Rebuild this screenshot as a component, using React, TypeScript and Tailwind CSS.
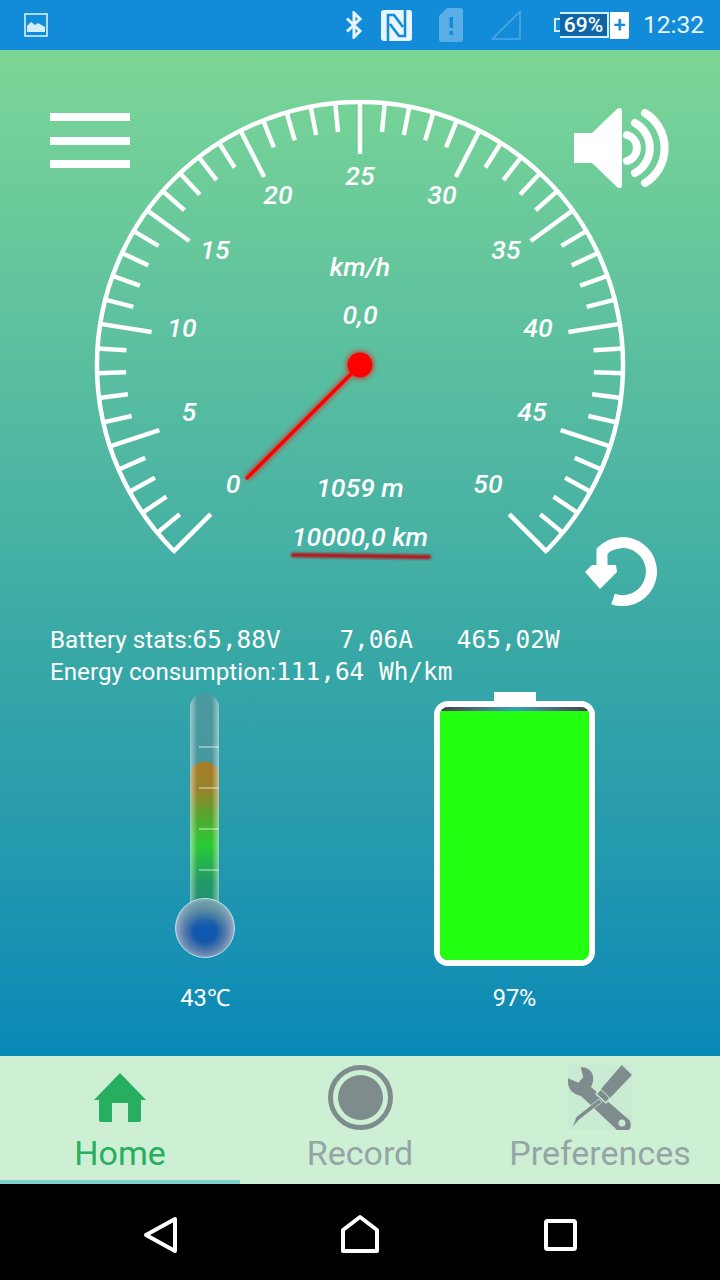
import { useMemo } from "react";

const scale = [
  { v: "0", x: 233, y: 484 },
  { v: "5", x: 189, y: 412 },
  { v: "10", x: 182, y: 328 },
  { v: "15", x: 215, y: 250 },
  { v: "20", x: 278, y: 195 },
  { v: "25", x: 360, y: 176 },
  { v: "30", x: 442, y: 195 },
  { v: "35", x: 506, y: 250 },
  { v: "40", x: 538, y: 328 },
  { v: "45", x: 532, y: 412 },
  { v: "50", x: 488, y: 484 },
];

const readouts = [
  { v: "km/h", y: 267 },
  { v: "0,0", y: 315 },
  { v: "1059 m", y: 488 },
  { v: "10000,0 km", y: 537 },
];

function Dial() {
  const ticks = useMemo(() => {
    const cx = 360;
    const cy = 365;
    const r = 263;
    const out = [];
    for (let i = 0; i <= 50; i++) {
      const a = ((225 - i * 5.4) * Math.PI) / 180;
      const major = i % 5 === 0;
      const end = i === 0 || i === 50;
      const start = end ? r + 2 : r;
      const len = major ? 52 : 29;
      out.push({
        x1: cx + start * Math.cos(a),
        y1: cy - start * Math.sin(a),
        x2: cx + (r - len) * Math.cos(a),
        y2: cy - (r - len) * Math.sin(a),
      });
    }
    return out;
  }, []);

  return (
    <svg viewBox="0 50 720 574" className="block w-[720px] h-[574px]">
      <defs>
        <filter id="glow" x="-30%" y="-30%" width="160%" height="160%">
          <feGaussianBlur stdDeviation="2.5" />
        </filter>
        <filter id="soft" x="-5%" y="-200%" width="110%" height="500%">
          <feGaussianBlur stdDeviation="0.8" />
        </filter>
      </defs>
      <path
        d="M174 551 A263 263 0 1 1 546 551"
        fill="none"
        stroke="white"
        strokeWidth="4.5"
      />
      {ticks.map((t, i) => (
        <line
          key={i}
          x1={t.x1}
          y1={t.y1}
          x2={t.x2}
          y2={t.y2}
          stroke="white"
          strokeWidth="4.5"
        />
      ))}
      {scale.map((s) => (
        <text
          key={s.v}
          x={s.x}
          y={s.y + 8.5}
          textAnchor="middle"
          className="fill-white italic font-medium text-[26.6px] font-['Roboto',sans-serif]"
        >
          {s.v}
        </text>
      ))}
      {readouts.map((s) => (
        <text
          key={s.v}
          x={360}
          y={s.y + 8.5}
          textAnchor="middle"
          className="fill-white italic font-medium text-[26.6px] font-['Roboto',sans-serif]"
        >
          {s.v}
        </text>
      ))}
      <g filter="url(#glow)" opacity="0.6">
        <line x1="360" y1="365" x2="247" y2="478" stroke="#ff0000" strokeWidth="6" />
        <circle cx="360" cy="365" r="14" fill="#ff0000" />
      </g>
      <line x1="360" y1="365" x2="247" y2="478" stroke="#ff0000" strokeWidth="3.5" strokeLinecap="round" />
      <circle cx="360" cy="365" r="12.5" fill="#ff0000" />
      <line x1="293" y1="555" x2="429" y2="557" stroke="#b3161c" strokeWidth="4.5" strokeLinecap="round" filter="url(#soft)" />
    </svg>
  );
}

function SpeakerIcon() {
  return (
    <svg viewBox="574 106 98 84" className="w-[98px] h-[84px]">
      <path d="M574 133H592L617 109Q622 106 622 112V184Q622 190 617 187L592 163H574Z" fill="white" />
      <g fill="none" stroke="white" strokeWidth="8" strokeLinecap="round">
        <path d="M627 135A13.5 13.5 0 0 1 627 161" />
        <path d="M635 123A28.5 28.5 0 0 1 635 173" />
        <path d="M645 113A41 41 0 0 1 645 183" />
      </g>
    </svg>
  );
}

function ResetIcon() {
  return (
    <svg viewBox="584 536 74 70" className="w-[74px] h-[70px]">
      <path
        d="M602 570V551A29 29 0 1 1 613 599"
        fill="none"
        stroke="white"
        strokeWidth="11"
      />
      <path d="M585 572L592 565H616L617 572L600 589Z" fill="white" />
    </svg>
  );
}

function Thermometer() {
  return (
    <svg viewBox="170 688 70 278" className="block w-[70px] h-[278px]">
      <defs>
        <linearGradient id="liquid" x1="0" y1="0" x2="0" y2="1">
          <stop offset="0" stopColor="#a5741c" />
          <stop offset="0.2" stopColor="#8f7f1f" />
          <stop offset="0.36" stopColor="#4fa024" />
          <stop offset="0.56" stopColor="#1fc82c" />
          <stop offset="0.8" stopColor="#17965c" />
          <stop offset="1" stopColor="#158676" />
        </linearGradient>
        <linearGradient id="tubeEdge" x1="0" y1="0" x2="1" y2="0">
          <stop offset="0" stopColor="white" stopOpacity="0.5" />
          <stop offset="0.25" stopColor="white" stopOpacity="0.05" />
          <stop offset="0.75" stopColor="white" stopOpacity="0.05" />
          <stop offset="1" stopColor="white" stopOpacity="0.5" />
        </linearGradient>
        <radialGradient id="bulb" cx="0.5" cy="0.55" r="0.55">
          <stop offset="0" stopColor="#0c56b8" />
          <stop offset="0.35" stopColor="#1558aa" />
          <stop offset="0.68" stopColor="#5f82ac" />
          <stop offset="0.88" stopColor="#95a6c8" />
          <stop offset="1" stopColor="#d8e8f2" />
        </radialGradient>
        <linearGradient id="bulbTop" x1="0" y1="0" x2="0" y2="1">
          <stop offset="0" stopColor="#5a9a98" stopOpacity="0.75" />
          <stop offset="0.5" stopColor="#5a9a98" stopOpacity="0" />
        </linearGradient>
      </defs>
      <rect x="190" y="693" width="29" height="230" rx="14.5" fill="#4a8a90" fillOpacity="0.6" />
      <path d="M190 776A14.5 14.5 0 0 1 219 776V910H190Z" fill="url(#liquid)" />
      <rect x="190" y="693" width="29" height="230" rx="14.5" fill="url(#tubeEdge)" />
      {[747, 788, 829, 870].map((y) => (
        <line key={y} x1="199" y1={y} x2="219" y2={y} stroke="white" strokeOpacity="0.75" />
      ))}
      <circle cx="205" cy="928" r="29.5" fill="url(#bulb)" />
      <circle cx="205" cy="928" r="29.5" fill="url(#bulbTop)" stroke="#d7eef2" strokeOpacity="0.8" strokeWidth="1" />
    </svg>
  );
}

function ToolsIcon() {
  return (
    <svg viewBox="0 0 64 65" className="w-[64px] h-[65px] bg-[#c9ebd3]">
      <path
        d="M0.3 13.3L10.3 17.7L15.3 12.3L12.7 2.3Q20 2 24 8Q27 15 23 22L59 53A8 8 0 1 1 48 64L13 31Q-2 27 0.3 13.3Z"
        fill="#7f8c8d"
      />
      <circle cx="54" cy="58" r="3.5" fill="#c9ebd3" />
      <path
        d="M31 34L34 37L11 55L4 63L8 52Z"
        fill="#7f8c8d"
        stroke="#c9ebd3"
        strokeWidth="0.8"
      />
      <path
        d="M33 24L42 33L38 38L28 29Z"
        fill="#7f8c8d"
        stroke="#c9ebd3"
        strokeWidth="1.5"
        strokeLinejoin="round"
      />
      <path d="M53.7 0L64 10L42 33L33 24Z" fill="#7f8c8d" />
    </svg>
  );
}

export default function App() {
  return (
    <div className="w-[720px] h-[1280px] flex flex-col overflow-hidden font-['Roboto',sans-serif]">
      <div className="h-[50px] shrink-0 bg-[#128cd8] text-white">
        <div className="h-full flex items-center pl-[24px] pr-[16px]">
          <svg viewBox="0 0 24 24" className="w-[24px] h-[24px]">
            <rect x="1" y="1" width="22" height="22" fill="none" stroke="#d5eefc" strokeWidth="1.6" />
            <path d="M3 19V13L7 9L11 12L14 10L21 14V19Z" fill="#d5eefc" />
          </svg>
          <svg viewBox="0 0 18 28" className="ml-[297px] w-[18px] h-[28px]">
            <path d="M2 7.5L15 20L9 26V2L15 8L2 20.5" fill="none" stroke="#e6f4fd" strokeWidth="3" />
          </svg>
          <svg viewBox="0 0 31 31" className="ml-[18px] w-[31px] h-[31px]">
            <rect width="31" height="31" rx="3" fill="#e9f6fe" />
            <path d="M7 31V5H13L22 17" fill="none" stroke="#128cd8" strokeWidth="2.6" />
            <path d="M24 0V26H18L9 14" fill="none" stroke="#128cd8" strokeWidth="2.6" />
          </svg>
          <svg viewBox="0 0 24 34" className="ml-[27px] w-[24px] h-[34px]">
            <path d="M8 0H21Q24 0 24 3V31Q24 34 21 34H3Q0 34 0 31V8Z" fill="#5aaee6" />
            <rect x="10.5" y="9" width="3.5" height="11" fill="#128cd8" />
            <rect x="10.5" y="23" width="3.5" height="4" fill="#128cd8" />
          </svg>
          <svg viewBox="0 0 30 30" className="ml-[28px] w-[30px] h-[30px]">
            <path d="M29 1.5V29H1.5Z" fill="none" stroke="#4ea6e2" strokeWidth="1.6" />
          </svg>
          <div className="ml-[33px] flex items-center">
            <div className="w-[6px] h-[14px] border-l-2 border-y-2 border-[#d5eefc]" />
            <div className="w-[49px] h-[26px] flex items-center justify-center border-2 border-l-0 border-[#d5eefc] bg-[#0f66a6] text-[21px] font-medium leading-none text-white">
              69%
            </div>
          </div>
          <div className="ml-[1px] w-[19px] h-[27px] flex items-center justify-center rounded-br-[2px] bg-white text-[#128cd8] text-[22px] font-medium leading-none">
            +
          </div>
          <span className="ml-auto text-[24.5px] leading-none text-[#e9f6fe]">12:32</span>
        </div>
      </div>

      <div className="flex-1 flex flex-col bg-gradient-to-b from-[#7bd695] via-[#38a8a6] via-60% to-[#0688b6] text-white">
        <div className="relative h-[574px] shrink-0">
          <Dial />
          <div className="absolute left-[50px] top-[63px] w-[80px] flex flex-col gap-[15.5px]">
            <div className="h-[8px] bg-white" />
            <div className="h-[8px] bg-white" />
            <div className="h-[8px] bg-white" />
          </div>
          <div className="absolute left-[574px] top-[56px]">
            <SpeakerIcon />
          </div>
          <div className="absolute left-[584px] top-[486px]">
            <ResetIcon />
          </div>
        </div>

        <div className="h-[64px] px-[50px] text-[24.2px] leading-[32px] whitespace-pre">
          <div>
            Battery stats:<span className="font-['DejaVu_Sans_Mono',monospace] text-[24.4px]">65,88V    7,06A   465,02W</span>
          </div>
          <div>
            Energy consumption:<span className="font-['DejaVu_Sans_Mono',monospace] text-[24.4px]">111,64 Wh/km</span>
          </div>
        </div>

        <div className="flex justify-between pl-[110px] pr-[110.5px]">
          <div className="w-[190px] flex flex-col items-center">
            <Thermometer />
            <div className="mt-[20px] text-[23.5px] leading-[24px]">43℃</div>
          </div>
          <div className="w-[190px] flex flex-col items-center">
            <div className="h-[278px] pt-[4px] flex flex-col items-center">
              <div className="w-[42px] h-[9px] bg-white" />
              <div className="w-[161px] h-[265px] border-[6px] border-white rounded-[14px] overflow-hidden flex flex-col">
                <div className="h-[4px] bg-gradient-to-r from-[#453f44] via-[#2aa6b8] to-[#453f44]" />
                <div className="flex-1 bg-[#22ff10]" />
              </div>
            </div>
            <div className="mt-[20px] text-[23.5px] leading-[24px]">97%</div>
          </div>
        </div>
      </div>

      <div className="h-[128px] shrink-0 grid grid-cols-3 bg-[#cdf0d5] text-[34px] leading-[36px]">
        <div className="flex flex-col items-center pt-[9px] border-b-4 border-[#7ecfca] text-[#27ae60]">
          <svg viewBox="0 0 52 65" className="w-[52px] h-[65px]">
            <path d="M26 8L52 35H47V55Q47 57 45 57H34V38H18V57H7Q5 57 5 55V35H0Z" fill="#27ae60" />
          </svg>
          <span className="mt-[5px]">Home</span>
        </div>
        <div className="flex flex-col items-center pt-[9px] text-[#95a5a6]">
          <svg viewBox="0 0 65 65" className="w-[65px] h-[65px]">
            <circle cx="32.5" cy="32.5" r="30" fill="none" stroke="#7f8c8d" strokeWidth="5" />
            <circle cx="32.5" cy="32.5" r="22.5" fill="#7f8c8d" />
          </svg>
          <span className="mt-[5px]">Record</span>
        </div>
        <div className="flex flex-col items-center pt-[9px] text-[#95a5a6]">
          <ToolsIcon />
          <span className="mt-[5px]">Preferences</span>
        </div>
      </div>

      <div className="h-[96px] shrink-0 bg-black flex items-center">
        <svg viewBox="0 0 720 96" className="w-[720px] h-[96px]">
          <g fill="none" stroke="white" strokeWidth="4" strokeLinejoin="round">
            <path d="M175 35V67L146 51Z" />
            <path d="M343 67V46L360 33L377 46V67Z" />
            <rect x="546" y="37" width="29" height="28" rx="1.5" />
          </g>
        </svg>
      </div>
    </div>
  );
}
